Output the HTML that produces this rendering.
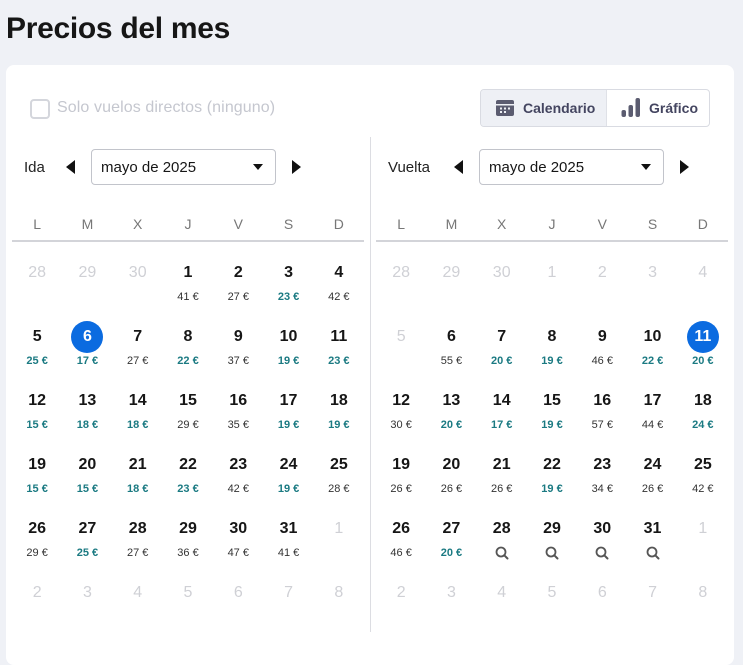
<!DOCTYPE html>
<html><head><meta charset="utf-8"><style>
*{margin:0;padding:0;box-sizing:border-box}
body{width:743px;height:632px;overflow:hidden;background:#eff1f6;font-family:"Liberation Sans",sans-serif;color:#161616;position:relative}
h1{position:absolute;left:6px;top:12px;font-size:30px;font-weight:bold;letter-spacing:-0.3px;color:#161616}
.card{position:absolute;left:6px;top:65px;width:728px;height:600px;background:#fff;border-radius:8px}
.abs{position:absolute}
.chk{left:30px;top:99px;width:20px;height:20px;border:2px solid #d4d6dc;border-radius:4px}
.chkl{left:57px;top:99px;font-size:16px;letter-spacing:0.1px;color:#c5c7cf}
.tog{left:480px;top:89px;width:230px;height:38px;border:1px solid #d9dbe2;border-radius:4px;display:flex;overflow:hidden;font-size:14px;font-weight:bold;color:#444560}
.tog div{display:flex;align-items:center}
.tog .a{width:126px;background:#eef0f5;border-right:1px solid #dfe1e7;padding-left:15px}
.tog .b{flex:1;padding-left:14px}
.lbl{font-size:15px;color:#222;top:159px}
.tri{top:160px;width:0;height:0;border-top:7px solid transparent;border-bottom:7px solid transparent}
.tl{border-right:9px solid #111}
.tr{border-left:9px solid #111}
.sel{top:149px;width:185px;height:36px;border:1px solid #c2c4cb;border-radius:4px;font-size:15px;padding:9px 0 0 9px;color:#161616}
.sel:after{content:"";position:absolute;right:12px;top:14px;border-left:5px solid transparent;border-right:5px solid transparent;border-top:6px solid #111}
.vline{left:370px;top:137px;width:1px;height:495px;background:#dcdde2}
.hline{top:240px;height:2px;background:#d3d4d9}
.cal{position:absolute;top:212px;width:352px}
.hd{display:grid;grid-template-columns:repeat(7,1fr);height:24px;font-size:14px;color:#777;text-align:center;line-height:24px}
.gr{display:grid;grid-template-columns:repeat(7,1fr);margin-top:19px}
.c{height:64px;text-align:center;position:relative}
.n{height:36px;line-height:36px;font-size:16px;font-weight:bold;color:#161616;position:relative}
.g .n{color:#cfd0d5;font-weight:normal}
.s .n{color:#fff}
.s .n:before{content:"";position:absolute;left:50%;top:2px;margin-left:-16px;width:32px;height:32px;border-radius:50%;background:#0b6be0;z-index:0}
.s .n span{position:relative}
.p{height:14px;line-height:14px;margin-top:-1px;font-size:11px;color:#333}
.t .p{color:#1b7a82;font-weight:bold}
.q .p svg{display:inline-block;vertical-align:top}
</style></head><body>
<h1>Precios del mes</h1>
<div class="card"></div>
<div class="abs chk"></div>
<div class="abs chkl">Solo vuelos directos (ninguno)</div>
<div class="abs tog">
 <div class="a"><svg width="18" height="16" viewBox="0 0 18 16"><rect x="0" y="0" width="18" height="16" rx="2" fill="#5b5c70"/><rect x="0" y="4" width="18" height="1.5" fill="#eef0f5"/><g fill="#eef0f5"><rect x="4" y="7.5" width="2" height="2"/><rect x="8" y="7.5" width="2" height="2"/><rect x="12" y="7.5" width="2" height="2"/><rect x="4" y="11" width="2" height="2"/><rect x="8" y="11" width="2" height="2"/></g></svg><span style="margin-left:9px">Calendario</span></div>
 <div class="b"><svg width="20" height="20" viewBox="0 0 20 20"><rect x="0.5" y="12" width="4.5" height="7" rx="2" fill="#5b5c70"/><rect x="7.5" y="7" width="4.5" height="12" rx="2" fill="#5b5c70"/><rect x="14.5" y="0" width="4.5" height="19" rx="2" fill="#5b5c70"/></svg><span style="margin-left:8px">Gráfico</span></div>
</div>
<div class="abs lbl" style="left:24px">Ida</div>
<div class="abs tri tl" style="left:66px"></div>
<div class="abs sel" style="left:91px">mayo de 2025</div>
<div class="abs tri tr" style="left:292px"></div>
<div class="abs lbl" style="left:388px">Vuelta</div>
<div class="abs tri tl" style="left:454px"></div>
<div class="abs sel" style="left:479px">mayo de 2025</div>
<div class="abs tri tr" style="left:680px"></div>
<div class="abs vline"></div>
<div class="abs hline" style="left:12px;width:352px"></div>
<div class="abs hline" style="left:376px;width:352px"></div>

<div class="cal" style="left:12px">
<div class="hd"><div>L</div><div>M</div><div>X</div><div>J</div><div>V</div><div>S</div><div>D</div></div>
<div class="gr">
<div class="c g"><div class="n">28</div></div><div class="c g"><div class="n">29</div></div><div class="c g"><div class="n">30</div></div>
<div class="c"><div class="n">1</div><div class="p">41 €</div></div><div class="c"><div class="n">2</div><div class="p">27 €</div></div><div class="c t"><div class="n">3</div><div class="p">23 €</div></div><div class="c"><div class="n">4</div><div class="p">42 €</div></div>
<div class="c t"><div class="n">5</div><div class="p">25 €</div></div><div class="c t s"><div class="n"><span>6</span></div><div class="p">17 €</div></div><div class="c"><div class="n">7</div><div class="p">27 €</div></div><div class="c t"><div class="n">8</div><div class="p">22 €</div></div><div class="c"><div class="n">9</div><div class="p">37 €</div></div><div class="c t"><div class="n">10</div><div class="p">19 €</div></div><div class="c t"><div class="n">11</div><div class="p">23 €</div></div>
<div class="c t"><div class="n">12</div><div class="p">15 €</div></div><div class="c t"><div class="n">13</div><div class="p">18 €</div></div><div class="c t"><div class="n">14</div><div class="p">18 €</div></div><div class="c"><div class="n">15</div><div class="p">29 €</div></div><div class="c"><div class="n">16</div><div class="p">35 €</div></div><div class="c t"><div class="n">17</div><div class="p">19 €</div></div><div class="c t"><div class="n">18</div><div class="p">19 €</div></div>
<div class="c t"><div class="n">19</div><div class="p">15 €</div></div><div class="c t"><div class="n">20</div><div class="p">15 €</div></div><div class="c t"><div class="n">21</div><div class="p">18 €</div></div><div class="c t"><div class="n">22</div><div class="p">23 €</div></div><div class="c"><div class="n">23</div><div class="p">42 €</div></div><div class="c t"><div class="n">24</div><div class="p">19 €</div></div><div class="c"><div class="n">25</div><div class="p">28 €</div></div>
<div class="c"><div class="n">26</div><div class="p">29 €</div></div><div class="c t"><div class="n">27</div><div class="p">25 €</div></div><div class="c"><div class="n">28</div><div class="p">27 €</div></div><div class="c"><div class="n">29</div><div class="p">36 €</div></div><div class="c"><div class="n">30</div><div class="p">47 €</div></div><div class="c"><div class="n">31</div><div class="p">41 €</div></div><div class="c g"><div class="n">1</div></div>
<div class="c g"><div class="n">2</div></div><div class="c g"><div class="n">3</div></div><div class="c g"><div class="n">4</div></div><div class="c g"><div class="n">5</div></div><div class="c g"><div class="n">6</div></div><div class="c g"><div class="n">7</div></div><div class="c g"><div class="n">8</div></div>
</div></div>

<div class="cal" style="left:376px">
<div class="hd"><div>L</div><div>M</div><div>X</div><div>J</div><div>V</div><div>S</div><div>D</div></div>
<div class="gr">
<div class="c g"><div class="n">28</div></div><div class="c g"><div class="n">29</div></div><div class="c g"><div class="n">30</div></div><div class="c g"><div class="n">1</div></div><div class="c g"><div class="n">2</div></div><div class="c g"><div class="n">3</div></div><div class="c g"><div class="n">4</div></div>
<div class="c g"><div class="n">5</div></div><div class="c"><div class="n">6</div><div class="p">55 €</div></div><div class="c t"><div class="n">7</div><div class="p">20 €</div></div><div class="c t"><div class="n">8</div><div class="p">19 €</div></div><div class="c"><div class="n">9</div><div class="p">46 €</div></div><div class="c t"><div class="n">10</div><div class="p">22 €</div></div><div class="c t s"><div class="n"><span>11</span></div><div class="p">20 €</div></div>
<div class="c"><div class="n">12</div><div class="p">30 €</div></div><div class="c t"><div class="n">13</div><div class="p">20 €</div></div><div class="c t"><div class="n">14</div><div class="p">17 €</div></div><div class="c t"><div class="n">15</div><div class="p">19 €</div></div><div class="c"><div class="n">16</div><div class="p">57 €</div></div><div class="c"><div class="n">17</div><div class="p">44 €</div></div><div class="c t"><div class="n">18</div><div class="p">24 €</div></div>
<div class="c"><div class="n">19</div><div class="p">26 €</div></div><div class="c"><div class="n">20</div><div class="p">26 €</div></div><div class="c"><div class="n">21</div><div class="p">26 €</div></div><div class="c t"><div class="n">22</div><div class="p">19 €</div></div><div class="c"><div class="n">23</div><div class="p">34 €</div></div><div class="c"><div class="n">24</div><div class="p">26 €</div></div><div class="c"><div class="n">25</div><div class="p">42 €</div></div>
<div class="c"><div class="n">26</div><div class="p">46 €</div></div><div class="c t"><div class="n">27</div><div class="p">20 €</div></div>
<div class="c q"><div class="n">28</div><div class="p"><svg width="14" height="14" viewBox="0 0 14 14"><circle cx="6" cy="6" r="4.5" fill="none" stroke="#555" stroke-width="1.8"/><path d="M9.3 9.3L12.5 12.5" stroke="#555" stroke-width="2" stroke-linecap="round"/></svg></div></div>
<div class="c q"><div class="n">29</div><div class="p"><svg width="14" height="14" viewBox="0 0 14 14"><circle cx="6" cy="6" r="4.5" fill="none" stroke="#555" stroke-width="1.8"/><path d="M9.3 9.3L12.5 12.5" stroke="#555" stroke-width="2" stroke-linecap="round"/></svg></div></div>
<div class="c q"><div class="n">30</div><div class="p"><svg width="14" height="14" viewBox="0 0 14 14"><circle cx="6" cy="6" r="4.5" fill="none" stroke="#555" stroke-width="1.8"/><path d="M9.3 9.3L12.5 12.5" stroke="#555" stroke-width="2" stroke-linecap="round"/></svg></div></div>
<div class="c q"><div class="n">31</div><div class="p"><svg width="14" height="14" viewBox="0 0 14 14"><circle cx="6" cy="6" r="4.5" fill="none" stroke="#555" stroke-width="1.8"/><path d="M9.3 9.3L12.5 12.5" stroke="#555" stroke-width="2" stroke-linecap="round"/></svg></div></div>
<div class="c g"><div class="n">1</div></div>
<div class="c g"><div class="n">2</div></div><div class="c g"><div class="n">3</div></div><div class="c g"><div class="n">4</div></div><div class="c g"><div class="n">5</div></div><div class="c g"><div class="n">6</div></div><div class="c g"><div class="n">7</div></div><div class="c g"><div class="n">8</div></div>
</div></div>
</body></html>
